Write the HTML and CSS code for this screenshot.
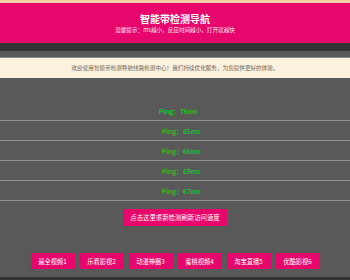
FILE: index.html
```html
<!DOCTYPE html>
<html>
<head>
    <meta charset="UTF-8">
    <meta name="viewport" content="width=device-width, initial-scale=1.0">
    <title>智能带检测导航</title>
    <link rel="stylesheet" href="styles.css">
</head>
<body>
    <!-- 顶部标题 -->
    <div class="header">
        <h1 class="title">智能带检测导航</h1>
        <p class="tip">温馨提示：ms越小，反应时间越小，打开就越快</p>
    </div>
    <div class="dark_bar"></div>

    <div class="main">
        <!-- 公告 -->
        <div class="notice">欢迎使用智能带检测导航线路检测中心！我们持续优化服务，为您提供更好的体验。</div>

        <!-- 线路列表 -->
        <ul class="ping_list">
            <li class="first">Ping：76ms</li>
            <li>Ping：65ms</li>
            <li>Ping：66ms</li>
            <li>Ping：69ms</li>
            <li>Ping：67ms</li>
        </ul>

        <div class="refresh_row">
            <a class="btn btn_refresh">点击这里重新检测刷新访问速度</a>
        </div>

        <div class="link_row">
            <a class="btn">最全视频1</a>
            <a class="btn">乐看影视2</a>
            <a class="btn">动漫神器3</a>
            <a class="btn">蜜桃视频4</a>
            <a class="btn">淘宝直播5</a>
            <a class="btn">优酷影视6</a>
        </div>
    </div>
    <div class="dark_bar bottom"></div>
</body>
</html>
```

FILE: styles.css
```css
/*公共样式*/
*{margin:0;padding:0;box-sizing:border-box;}
html,body{width:100%;height:100%;}
body{background:#595959;font-family:"Noto Sans CJK SC","Noto Sans",sans-serif;overflow:hidden;}
ul{list-style:none;}

/*头部*/
.header{height:43px;background:#e6066c;border-top:3px solid #f2cfa8;display:flex;flex-direction:column;align-items:center;justify-content:center;color:#fff;}
.title{font-size:10px;font-weight:700;line-height:13px;}
.tip{font-size:5.6px;line-height:8px;margin-top:1px;color:#fbe3ee;}
.dark_bar{height:8px;background:#333;}

/*主体*/
.main{padding-top:6px;}
.notice{height:21px;border-top:1px solid #8a8a8a;background:#fdf1df;color:#6e6550;font-size:5.6px;display:flex;align-items:center;justify-content:center;}

/*线路列表*/
.ping_list{margin-top:23px;}
.ping_list li{height:20px;border-bottom:1px solid #8c8c8c;color:#1fc01f;font-size:6.6px;font-weight:700;display:flex;align-items:center;justify-content:center;padding-left:12px;}
.ping_list li.first{padding-left:6px;}

/*按钮*/
.btn{display:flex;align-items:center;justify-content:center;background:#e6066c;color:#fff;font-size:6.3px;border-radius:1px;}
.refresh_row{display:flex;justify-content:center;margin-top:8px;}
.btn_refresh{width:104px;height:17px;font-size:6.4px;}
.link_row{display:flex;justify-content:center;gap:5px;margin-top:27px;}
.link_row .btn{width:44px;height:16px;}
.bottom{margin-top:8px;}
```
